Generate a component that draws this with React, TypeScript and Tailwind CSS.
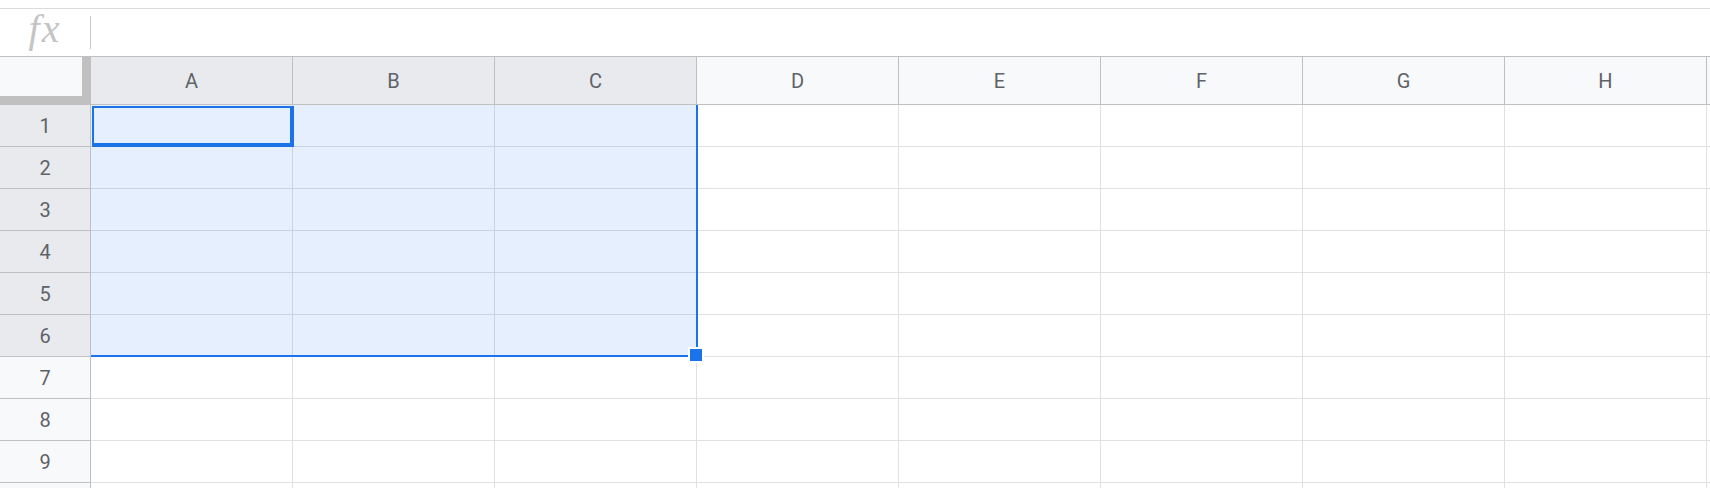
import React from "react";

const COLUMNS = ["A", "B", "C", "D", "E", "F", "G", "H"];
const ROWS = [1, 2, 3, 4, 5, 6, 7, 8, 9, 10];
const SELECTED_COLS = new Set(["A", "B", "C"]);
const SELECTED_ROWS = new Set([1, 2, 3, 4, 5, 6]);
// rows whose number lies below the visible area
const LAST_VISIBLE_LABEL = 9;

function FormulaBar() {
  return (
    <div className="h-[56px] pt-2">
      <div className="h-[48px] border-t border-[#dadce0] flex items-center">
        <div className="w-[90px] flex justify-center items-center">
          <span className="font-['Liberation_Serif',serif] italic text-[40px] leading-none tracking-[2px] text-[#c4c4c4] -mt-[7px]">
            fx
          </span>
        </div>
        <div className="w-px h-[33px] bg-[#c8c8c8]" />
      </div>
    </div>
  );
}

function ColumnHeaders() {
  return (
    <div className="flex h-[49px] border-y border-[#c0c0c0]">
      {/* corner with freeze handles */}
      <div className="w-[91px] shrink-0 bg-[#c0c0c0]">
        <div className="w-[82px] h-[39px] bg-[#f8f9fa]" />
      </div>
      {COLUMNS.map((c) => (
        <div
          key={c}
          className={
            "w-[202px] shrink-0 border-r border-[#c0c0c0] flex items-center justify-center text-[20px] text-[#5f6368] " +
            (SELECTED_COLS.has(c) ? "bg-[#e8eaed]" : "bg-[#f8f9fa]")
          }
        >
          {c}
        </div>
      ))}
      <div className="flex-1 bg-[#f8f9fa]" />
    </div>
  );
}

function Row({ n }: { n: number }) {
  return (
    <div className="flex h-[42px] shrink-0">
      <div
        className={
          "w-[91px] shrink-0 border-r border-b border-[#c0c0c0] flex items-center justify-center text-[20px] text-[#5f6368] " +
          (SELECTED_ROWS.has(n) ? "bg-[#e8eaed]" : "bg-[#f8f9fa]")
        }
      >
        {n <= LAST_VISIBLE_LABEL ? n : null}
      </div>
      {COLUMNS.map((c) => (
        <div key={c} className="w-[202px] shrink-0 border-r border-b border-[#e0e0e0] bg-white" />
      ))}
      <div className="flex-1 border-b border-[#e0e0e0] bg-white" />
    </div>
  );
}

export default function App() {
  return (
    <div className="relative w-[1710px] h-[488px] overflow-hidden bg-white font-['Roboto',sans-serif]">
      <FormulaBar />
      <ColumnHeaders />
      <div className="flex flex-col">
        {ROWS.map((n) => (
          <Row key={n} n={n} />
        ))}
      </div>

      {/* selected range A1:C6 */}
      <div className="absolute left-[91px] top-[105px] w-[607px] h-[252px] bg-[rgba(14,101,235,0.1)] border-r-2 border-b-2 border-[#1a73e8]" />
      {/* active cell A1 */}
      <div className="absolute left-[92px] top-[106px] w-[202px] h-[41px] border-l-2 border-t-2 border-r-4 border-b-4 border-[#1a73e8]" />
      {/* fill handle */}
      <div className="absolute left-[688px] top-[347px] w-[16px] h-[16px] bg-[#1a73e8] border-2 border-white" />
    </div>
  );
}
